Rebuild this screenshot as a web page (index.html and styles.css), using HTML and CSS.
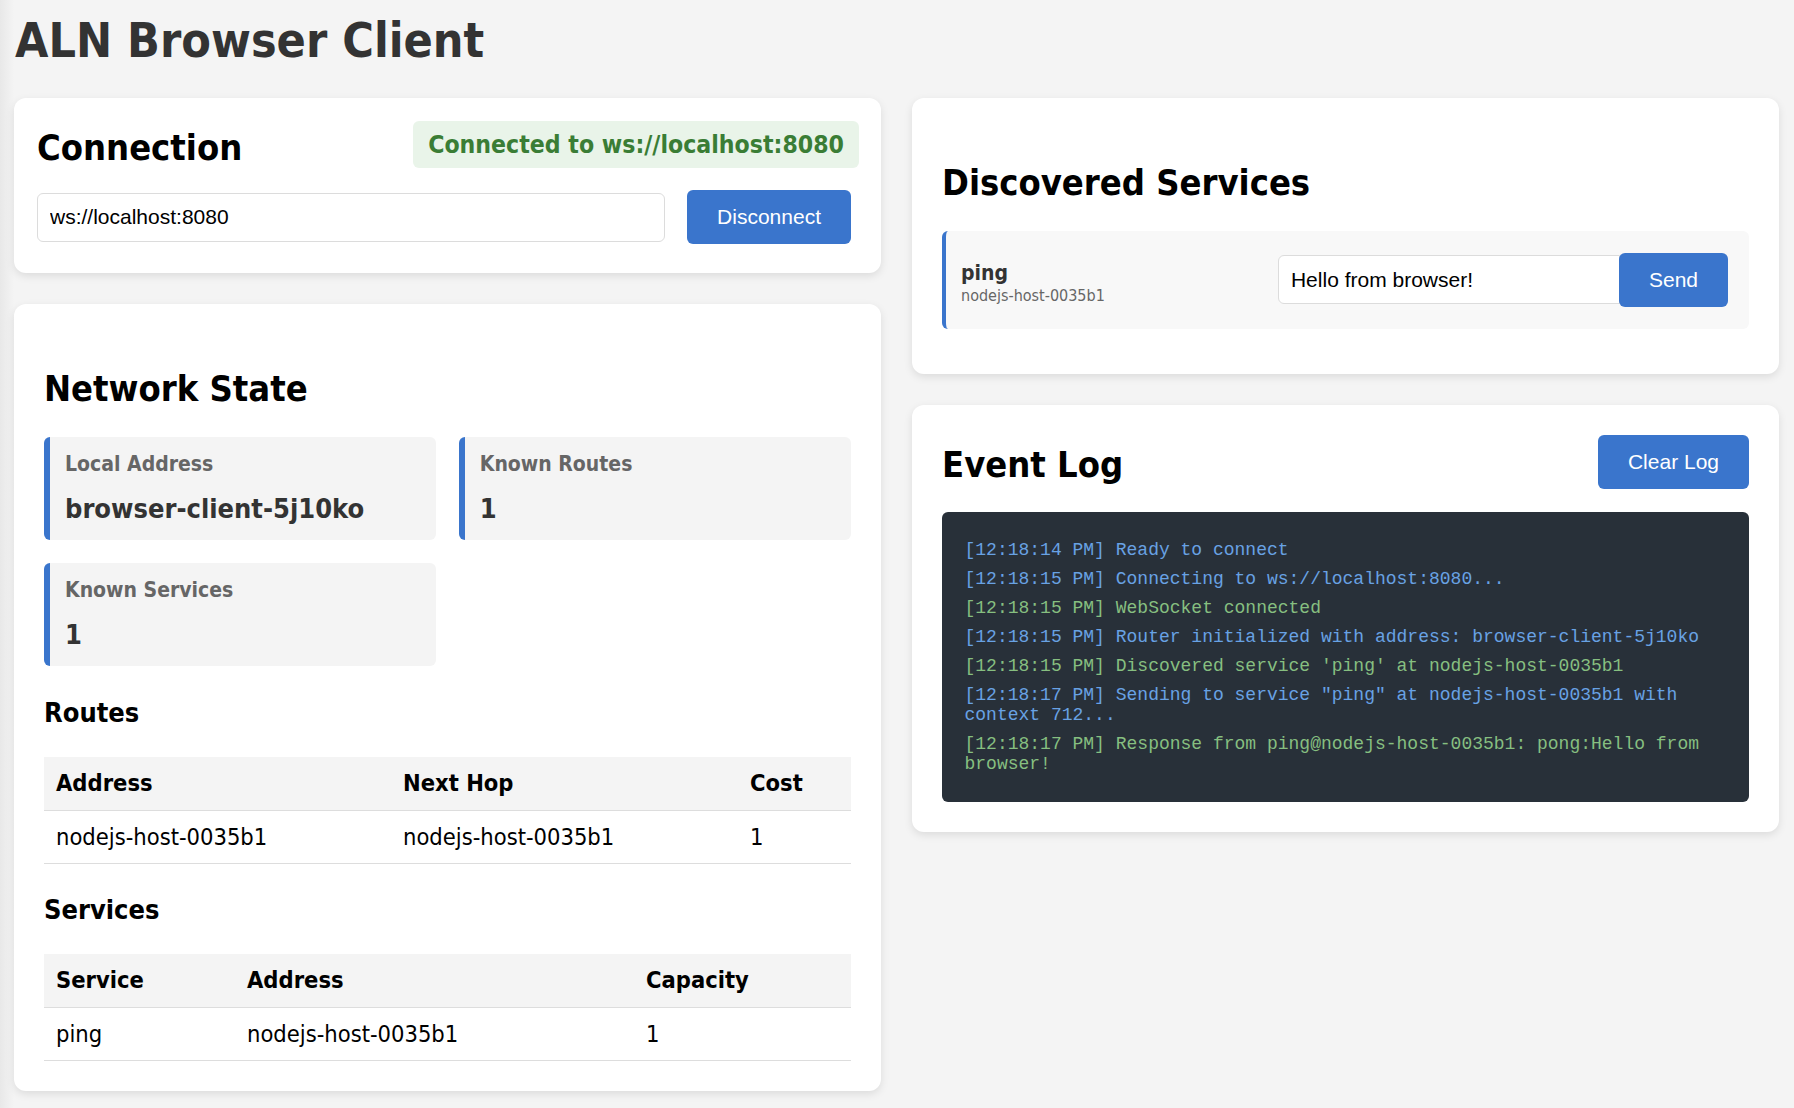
FILE: index.html
```html
<!DOCTYPE html>
<html lang="en">
<head>
<meta charset="utf-8">
<title>ALN Browser Client</title>
<link rel="stylesheet" href="styles.css">
</head>
<body>
<h1 class="page-title">ALN Browser Client</h1>
<div class="layout">
  <div class="column">
    <section class="card card-connection">
      <div class="card-header">
        <h2 class="header-title">Connection</h2>
        <span class="status">Connected to ws://localhost:8080</span>
      </div>
      <div class="conn-row">
        <input class="text-input conn-input" type="text" value="ws://localhost:8080">
        <button class="btn conn-btn">Disconnect</button>
      </div>
    </section>

    <section class="card">
      <h2 class="section-title">Network State</h2>
      <div class="stats">
        <div class="stat">
          <div class="stat-label">Local Address</div>
          <div class="stat-value">browser-client-5j10ko</div>
        </div>
        <div class="stat">
          <div class="stat-label">Known Routes</div>
          <div class="stat-value">1</div>
        </div>
        <div class="stat">
          <div class="stat-label">Known Services</div>
          <div class="stat-value">1</div>
        </div>
      </div>

      <h3 class="sub-title">Routes</h3>
      <table class="data-table">
        <thead>
          <tr><th class="col-r-address">Address</th><th class="col-r-hop">Next Hop</th><th class="col-r-cost">Cost</th></tr>
        </thead>
        <tbody>
          <tr><td>nodejs-host-0035b1</td><td>nodejs-host-0035b1</td><td>1</td></tr>
        </tbody>
      </table>

      <h3 class="sub-title sub-title-next">Services</h3>
      <table class="data-table">
        <thead>
          <tr><th class="col-s-service">Service</th><th class="col-s-address">Address</th><th class="col-s-cap">Capacity</th></tr>
        </thead>
        <tbody>
          <tr><td>ping</td><td>nodejs-host-0035b1</td><td>1</td></tr>
        </tbody>
      </table>
    </section>
  </div>

  <div class="column">
    <section class="card">
      <h2 class="section-title">Discovered Services</h2>
      <div class="service-item">
        <div class="service-info">
          <div class="service-name">ping</div>
          <div class="service-host">nodejs-host-0035b1</div>
        </div>
        <div class="service-send">
          <input class="text-input send-input" type="text" value="Hello from browser!">
          <button class="btn send-btn">Send</button>
        </div>
      </div>
    </section>

    <section class="card">
      <div class="card-header log-header">
        <h2 class="header-title">Event Log</h2>
        <button class="btn">Clear Log</button>
      </div>
      <div class="log">
        <div class="log-entry info">[12:18:14 PM] Ready to connect</div>
        <div class="log-entry info">[12:18:15 PM] Connecting to ws://localhost:8080...</div>
        <div class="log-entry success">[12:18:15 PM] WebSocket connected</div>
        <div class="log-entry info">[12:18:15 PM] Router initialized with address: browser-client-5j10ko</div>
        <div class="log-entry success">[12:18:15 PM] Discovered service 'ping' at nodejs-host-0035b1</div>
        <div class="log-entry info">[12:18:17 PM] Sending to service "ping" at nodejs-host-0035b1 with context 712...</div>
        <div class="log-entry success">[12:18:17 PM] Response from ping@nodejs-host-0035b1: pong:Hello from browser!</div>
      </div>
    </section>
  </div>
</div>
</body>
</html>
```

FILE: styles.css
```css
* {
  box-sizing: border-box;
}

html, body {
  margin: 0;
}

body {
  padding: 12px 15px 30px 14px;
  background: linear-gradient(to right, #e8e8e8 0, #f4f4f4 14px) #f4f4f4;
  font-family: "DejaVu Sans Condensed", "DejaVu Sans", sans-serif;
  font-stretch: condensed;
  color: #000;
  min-height: 1108px;
}

.page-title {
  margin: 0 0 30px 1px;
  font-size: 48px;
  line-height: 56px;
  font-weight: bold;
  color: #333;
}

.layout {
  display: grid;
  grid-template-columns: 1fr 1fr;
  column-gap: 31px;
  align-items: start;
}

.column {
  display: flex;
  flex-direction: column;
  gap: 31px;
}

.card {
  background: #fff;
  border-radius: 12px;
  box-shadow: 0 3px 9px rgba(0, 0, 0, 0.1);
  padding: 30px;
}

.card-connection {
  padding: 23px 22px 29px 23px;
}

.card-header {
  display: flex;
  justify-content: space-between;
  align-items: center;
}

.header-title {
  margin: 0;
  font-size: 36px;
  line-height: 36px;
  padding-top: 6px;
  font-weight: bold;
}

.status {
  background: #e9f4e9;
  color: #3a7d35;
  font-weight: bold;
  font-size: 24.6px;
  line-height: 29px;
  padding: 9px 15px;
  border-radius: 6px;
}

.conn-row {
  display: flex;
  align-items: center;
  margin-top: 22px;
}

.text-input {
  font-family: "Liberation Sans", Arial, sans-serif;
  font-stretch: normal;
  font-size: 21px;
  line-height: 24px;
  padding: 11.5px 12px;
  border: 1px solid #dcdcdc;
  border-radius: 6px;
  color: #000;
  background: #fff;
  outline: none;
}

.conn-input {
  flex: 1;
  min-width: 0;
}

.btn {
  font-family: "Liberation Sans", Arial, sans-serif;
  font-stretch: normal;
  font-size: 21px;
  line-height: 24px;
  padding: 15px 30px;
  border: none;
  border-radius: 6px;
  background: #3a75cc;
  color: #fff;
  cursor: pointer;
}

.conn-btn {
  margin-left: 22px;
  margin-right: 8px;
}

.section-title {
  margin: 33px 0 26px;
  font-size: 36px;
  line-height: 43.5px;
  font-weight: bold;
}

.stats {
  display: grid;
  grid-template-columns: 1fr 1fr;
  gap: 22.5px;
}

.stat {
  background: #f4f4f4;
  border-left: 6px solid #3a75cc;
  border-radius: 6px;
  padding: 15.5px 15px 15px 15px;
}

.stat-label {
  font-size: 21px;
  line-height: 25px;
  font-weight: bold;
  color: #666;
  margin-bottom: 16px;
}

.stat-value {
  font-size: 27px;
  line-height: 32px;
  font-weight: bold;
  color: #333;
}

.sub-title {
  margin: 30px 0 28px;
  font-size: 27px;
  line-height: 33px;
  font-weight: bold;
}

.sub-title-next {
  margin-top: 29px;
}

.data-table {
  width: 100%;
  border-collapse: collapse;
  table-layout: fixed;
  font-size: 23.5px;
  line-height: 28.5px;
}

.data-table th,
.data-table td {
  text-align: left;
  padding: 12px;
  border-bottom: 1px solid #dddddd;
}

.data-table th {
  background: #f4f4f4;
  font-weight: bold;
}

.col-r-address { width: 347px; }
.col-r-hop { width: 347px; }
.col-r-cost { width: auto; }

.col-s-service { width: 191px; }
.col-s-address { width: 399px; }
.col-s-cap { width: auto; }

.service-item {
  display: flex;
  justify-content: space-between;
  align-items: center;
  background: #f8f8f8;
  border-left: 4.5px solid #3a75cc;
  border-radius: 6px;
  padding: 22px 21px 22px 15px;
  margin-bottom: 15px;
}

.service-info {
  margin-top: 7px;
}

.service-name {
  font-size: 21px;
  line-height: 25px;
  font-weight: bold;
  color: #333;
}

.service-host {
  font-size: 16px;
  line-height: 20px;
  color: #666;
}

.service-send {
  display: flex;
  align-items: center;
}

.send-input {
  width: 342px;
  border-radius: 6px 0 0 6px;
}

.send-btn {
  margin-left: -1px;
}

.log-header {
  margin-bottom: 23px;
}

.log {
  background: #283039;
  border-radius: 6px;
  padding: 23.5px 22.5px 24px;
  font-family: "Liberation Mono", "Courier New", monospace;
  font-stretch: normal;
  font-size: 18px;
  line-height: 20px;
}

.log-entry {
  padding: 4.5px 0;
}

.log-entry.info {
  color: #68a2e4;
}

.log-entry.success {
  color: #86bf80;
}
```
